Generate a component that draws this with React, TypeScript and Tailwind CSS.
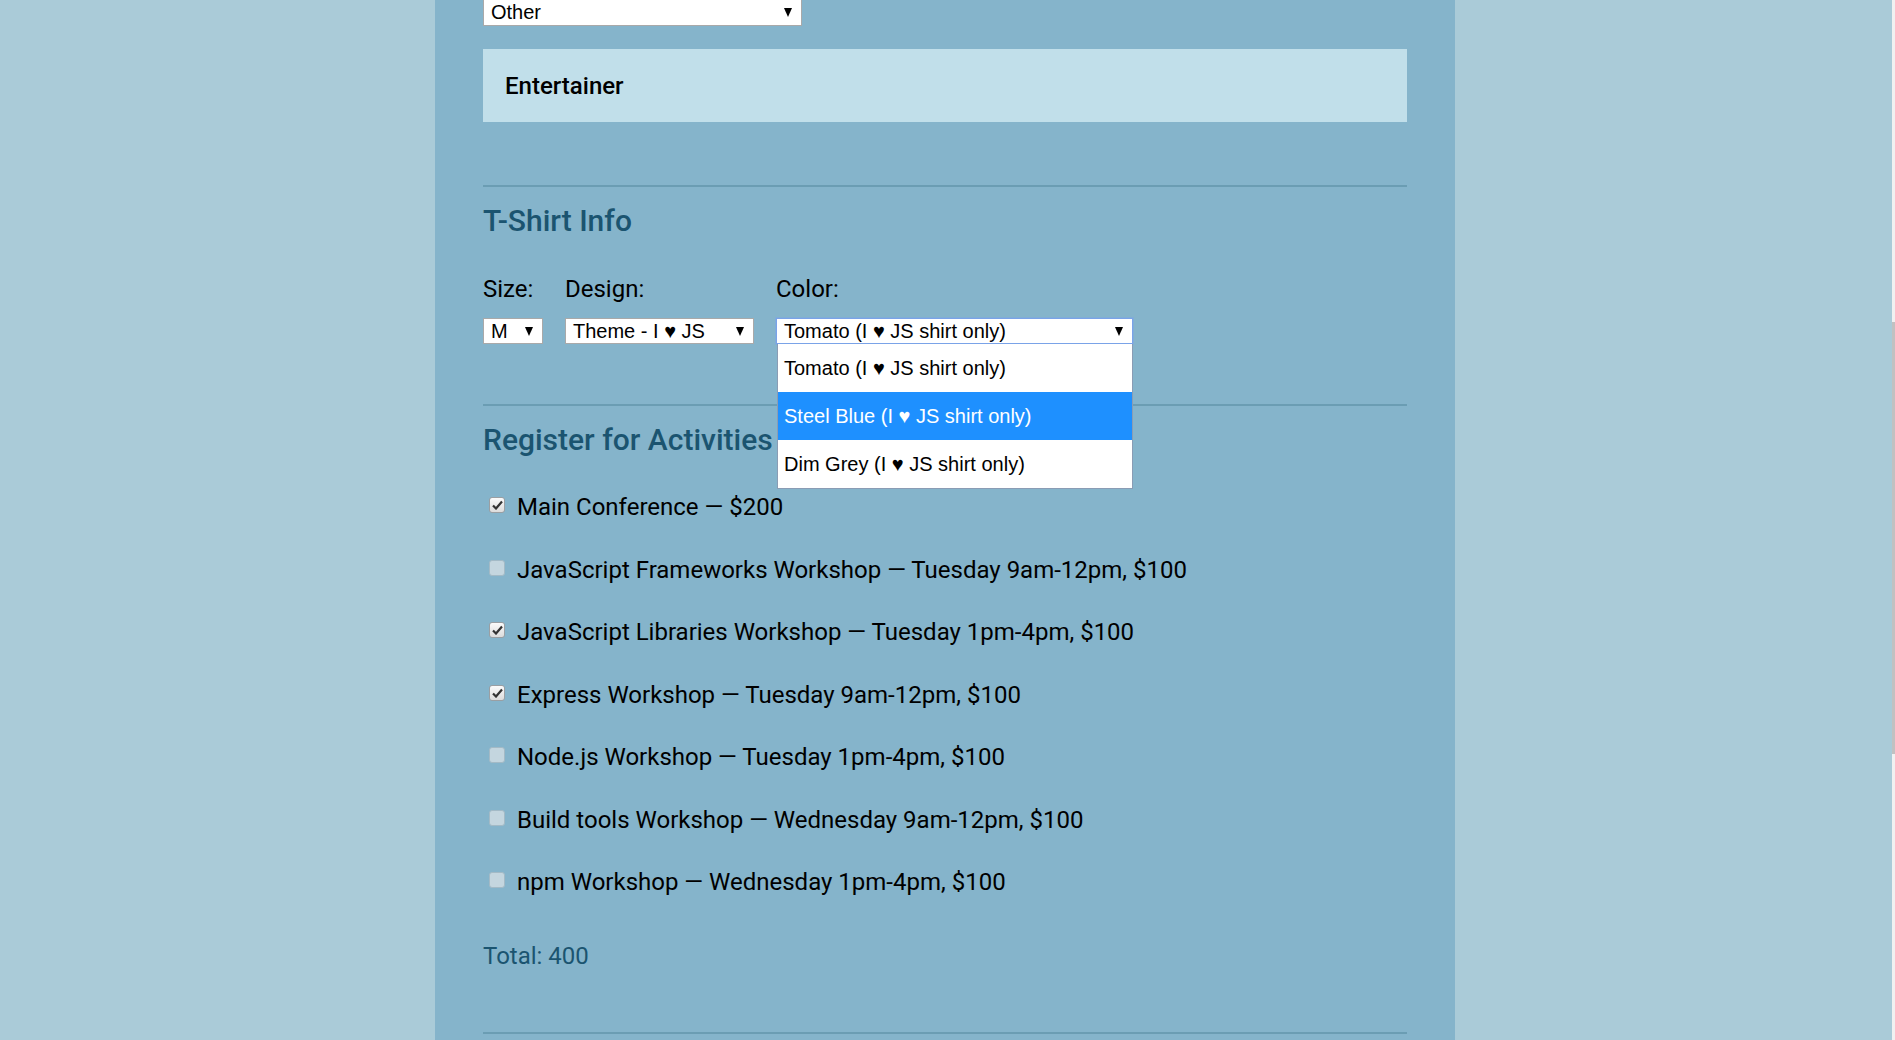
import React from "react";

const activities = [
  { label: "Main Conference — $200", checked: true },
  { label: "JavaScript Frameworks Workshop — Tuesday 9am-12pm, $100", checked: false },
  { label: "JavaScript Libraries Workshop — Tuesday 1pm-4pm, $100", checked: true },
  { label: "Express Workshop — Tuesday 9am-12pm, $100", checked: true },
  { label: "Node.js Workshop — Tuesday 1pm-4pm, $100", checked: false },
  { label: "Build tools Workshop — Wednesday 9am-12pm, $100", checked: false },
  { label: "npm Workshop — Wednesday 1pm-4pm, $100", checked: false },
];

const colorOptions = [
  "Tomato (I ♥ JS shirt only)",
  "Steel Blue (I ♥ JS shirt only)",
  "Dim Grey (I ♥ JS shirt only)",
];

function Arrow() {
  return (
    <svg width="8" height="9" viewBox="0 0 8 9" className="shrink-0">
      <polygon points="0,0 8,0 4,9" fill="#000" />
    </svg>
  );
}

function FakeSelect({
  value,
  className = "",
}: {
  value: string;
  className?: string;
}) {
  return (
    <div
      className={`flex items-center justify-between bg-white pl-[7px] pr-[9px] font-['Liberation_Sans',Arial,sans-serif] text-[20px] leading-none text-black ${className}`}
    >
      <span className="whitespace-nowrap">{value}</span>
      <Arrow />
    </div>
  );
}

function Checkbox({ checked }: { checked: boolean }) {
  if (checked) {
    return (
      <span className="mt-[4px] ml-[6px] flex h-[16px] w-[16px] shrink-0 items-center justify-center self-start rounded-[3px] border border-[#9a9fa3] bg-gradient-to-b from-[#fbfbfb] to-[#dcdcdc]">
        <svg width="11" height="10" viewBox="0 0 11 10">
          <path
            d="M1 5.5 L4 8.5 L10 1.5"
            fill="none"
            stroke="#333"
            strokeWidth="2.2"
          />
        </svg>
      </span>
    );
  }
  return (
    <span className="mt-[4px] ml-[6px] h-[16px] w-[16px] shrink-0 self-start rounded-[3px] border border-[#a3bac6] bg-[#c4d6df]" />
  );
}

function Divider({ className = "" }: { className?: string }) {
  return <div className={`h-[2px] bg-[#6b9db3] ${className}`} />;
}

export default function App() {
  return (
    <div className="flex h-[1040px] w-full overflow-hidden bg-[#aacbd8] font-['Roboto',sans-serif] text-black">
      <div className="flex flex-1 justify-center pr-[2px]">
        <div className="w-[1020px] bg-[#85b4cb] px-12">
          <FakeSelect
            value="Other"
            className="-mt-[2px] h-[28px] w-[319px] border border-[#a9a9a9]"
          />

          <div className="mt-[23px] flex h-[73px] items-center bg-[#c1dfea] px-[22px] text-[24px] font-medium">
            Entertainer
          </div>

          <Divider className="mt-[63px]" />

          <h2 className="mt-[16px] text-[30px] leading-[36px] font-medium text-[#1b5470]">
            T-Shirt Info
          </h2>

          <div className="mt-[36px] flex gap-[22px] text-[24px] leading-[28px]">
            <div className="flex flex-col">
              <label>Size:</label>
              <FakeSelect
                value="M"
                className="mt-[15px] h-[26px] w-[60px] border border-[#a9a9a9]"
              />
            </div>
            <div className="flex flex-col">
              <label>Design:</label>
              <FakeSelect
                value="Theme - I ♥ JS"
                className="mt-[15px] h-[26px] w-[189px] border border-[#a9a9a9]"
              />
            </div>
            <div className="flex flex-col">
              <label>Color:</label>
              <div className="relative mt-[15px]">
                <FakeSelect
                  value={colorOptions[0]}
                  className="h-[26px] w-[357px] border border-[#7aa3e8] shadow-[0_0_0_1px_rgba(122,163,232,0.45)]"
                />
                <div className="absolute top-full right-0 left-[1px] z-10 border border-t-0 border-[#8a9cb4] bg-white font-['Liberation_Sans',Arial,sans-serif] text-[20px] leading-none">
                  {colorOptions.map((opt, i) => (
                    <div
                      key={opt}
                      className={`flex h-[48px] items-center px-[6px] whitespace-nowrap ${
                        i === 1 ? "bg-[#1e90ff] text-white" : "text-black"
                      }`}
                    >
                      {opt}
                    </div>
                  ))}
                </div>
              </div>
            </div>
          </div>

          <Divider className="mt-[60px]" />

          <h2 className="mt-[16px] text-[30px] leading-[36px] font-medium text-[#1b5470]">
            Register for Activities
          </h2>

          <div className="mt-[35px] flex flex-col gap-[34.5px] text-[24px] leading-[28px]">
            {activities.map((a) => (
              <label key={a.label} className="flex h-[28px] gap-[12px]">
                <Checkbox checked={a.checked} />
                <span className="whitespace-nowrap">{a.label}</span>
              </label>
            ))}
          </div>

          <p className="mt-[46px] text-[24px] leading-[28px] text-[#1b5470]">
            Total: 400
          </p>

          <Divider className="mt-[62px]" />
        </div>
      </div>
      <div className="flex w-[3px] flex-col bg-[#f1f1f1]">
        <div className="mt-[322px] h-[432px] bg-[#c1c1c1]" />
      </div>
    </div>
  );
}
